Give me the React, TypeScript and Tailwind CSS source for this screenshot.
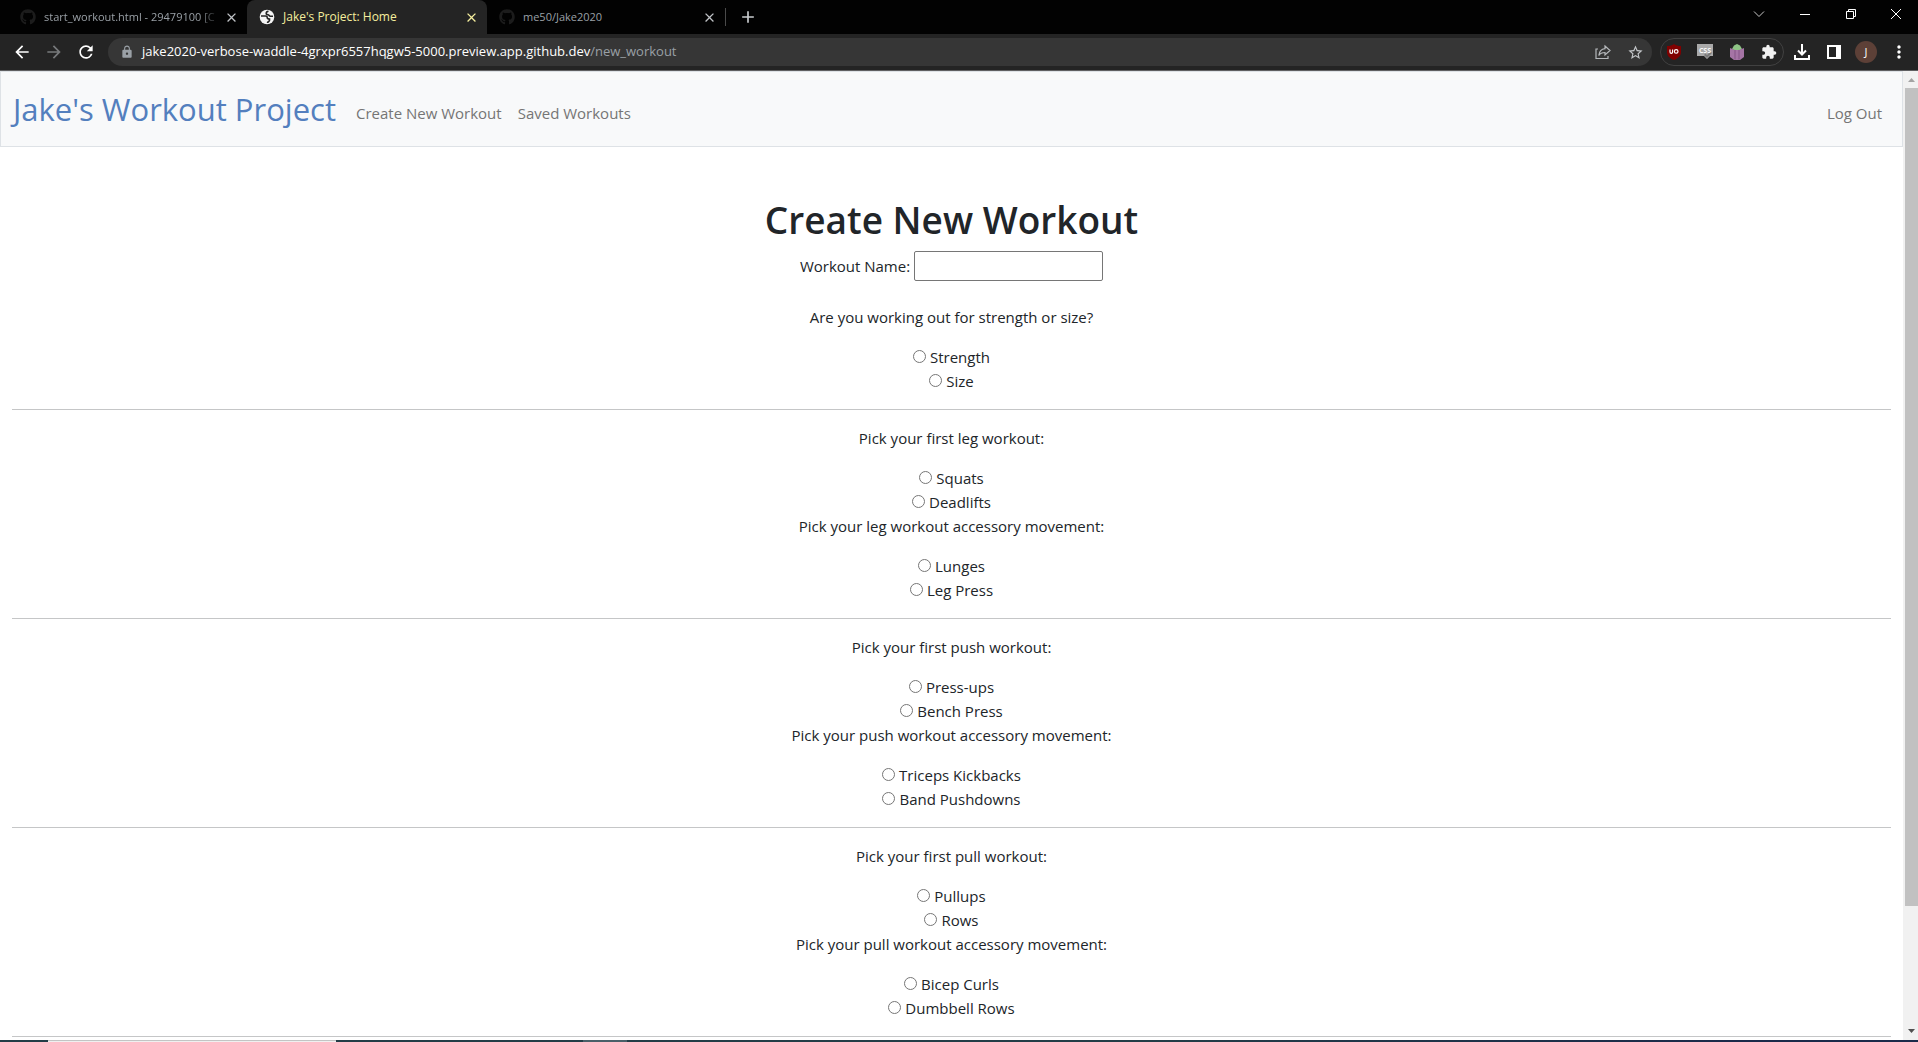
import { FaGithub } from "react-icons/fa";
import {
  MdArrowBack,
  MdArrowForward,
  MdClose,
  MdExtension,
  MdLock,
  MdMoreVert,
  MdRefresh,
  MdStarBorder,
  MdAdd,
} from "react-icons/md";

type Group = { prompt: string; name: string; options: string[] };

const sections: Group[][] = [
  [{ prompt: "Are you working out for strength or size?", name: "goal", options: ["Strength", "Size"] }],
  [
    { prompt: "Pick your first leg workout:", name: "leg", options: ["Squats", "Deadlifts"] },
    { prompt: "Pick your leg workout accessory movement:", name: "leg-accessory", options: ["Lunges", "Leg Press"] },
  ],
  [
    { prompt: "Pick your first push workout:", name: "push", options: ["Press-ups", "Bench Press"] },
    {
      prompt: "Pick your push workout accessory movement:",
      name: "push-accessory",
      options: ["Triceps Kickbacks", "Band Pushdowns"],
    },
  ],
  [
    { prompt: "Pick your first pull workout:", name: "pull", options: ["Pullups", "Rows"] },
    {
      prompt: "Pick your pull workout accessory movement:",
      name: "pull-accessory",
      options: ["Bicep Curls", "Dumbbell Rows"],
    },
  ],
];

function TabStrip() {
  return (
    <div className="flex h-[34px] shrink-0 bg-[#020202] text-[11px] text-[#9aa0a6]">
      <div className="flex w-[247px] items-center rounded-br-lg pl-5 pr-2">
        <FaGithub className="size-4 shrink-0 text-[#1c1c1c]" />
        <span className="ml-2 grow whitespace-nowrap [mask-image:linear-gradient(to_right,black_88%,transparent_100%)]">
          start_workout.html - 29479100 [C
        </span>
        <button aria-label="Close tab" className="ml-1 text-[#c0c3c7]">
          <MdClose className="size-[15px]" />
        </button>
      </div>
      <div className="flex w-[240px] items-center rounded-t-lg bg-[#242424] pl-3 pr-2 text-[12px] text-[#f5ee9e]">
        <svg viewBox="0 0 16 16" className="size-4">
          <circle cx="8" cy="8" r="7.300" fill="#f4f4f4" />
          <path
            d="M2 7h4.500c1.500 0 1.800.8 1.800 1.800S9.500 10 10.500 10v1.500c0 1-2 1-2 2.500"
            fill="none"
            stroke="#242424"
            strokeWidth="1.600"
          />
          <path
            d="M9.500 2.300c-1.800.2-2.300 1-2.300 2S8 5.800 9 5.800c1.300 0 1 1.400 2.300 1.400H14"
            fill="none"
            stroke="#242424"
            strokeWidth="1.600"
          />
        </svg>
        <span className="ml-2 grow">Jake's Project: Home</span>
        <button aria-label="Close tab">
          <MdClose className="size-[15px]" />
        </button>
      </div>
      <div className="flex w-[238px] items-center pl-3 pr-2">
        <FaGithub className="size-4 text-[#1c1c1c]" />
        <span className="ml-2 grow">me50/Jake2020</span>
        <button aria-label="Close tab" className="text-[#c0c3c7]">
          <MdClose className="size-[15px]" />
        </button>
      </div>
      <div className="my-2 w-px bg-[#4a4a4a]" />
      <button aria-label="New tab" className="ml-3 text-[#c8cbce]">
        <MdAdd className="size-5" />
      </button>
      <div className="ml-auto flex items-start text-white">
        <button aria-label="Search tabs" className="flex h-7 w-[46px] items-center justify-center">
          <svg viewBox="0 0 12 12" className="size-3" fill="none" stroke="#c8c8c8">
            <path d="M1 3.500l5 5 5-5" />
          </svg>
        </button>
        <button aria-label="Minimize" className="flex h-7 w-[46px] items-center justify-center">
          <svg viewBox="0 0 10 10" className="size-[10px]" fill="none" stroke="currentColor">
            <path d="M0 5.500h10" />
          </svg>
        </button>
        <button aria-label="Restore" className="flex h-7 w-[46px] items-center justify-center">
          <svg viewBox="0 0 10 10" className="size-[10px]" fill="none" stroke="currentColor">
            <path d="M.5 2.500h7v7h-7zM2.500 2.500v-2h7v7h-2" />
          </svg>
        </button>
        <button aria-label="Close window" className="flex h-7 w-11 items-center justify-center">
          <svg viewBox="0 0 10 10" className="size-[10px]" fill="none" stroke="currentColor">
            <path d="M0 0l10 10M10 0L0 10" />
          </svg>
        </button>
      </div>
    </div>
  );
}

function Toolbar() {
  return (
    <div className="flex h-[37px] shrink-0 items-center border-b border-[#5f5f61] bg-[#242424] pl-3 pr-[15px]">
      <button aria-label="Back" className="text-white">
        <MdArrowBack className="size-5" />
      </button>
      <button aria-label="Forward" className="ml-3 text-[#77797b]">
        <MdArrowForward className="size-5" />
      </button>
      <button aria-label="Reload" className="ml-3 text-white">
        <MdRefresh className="size-5" />
      </button>
      <div className="ml-3 flex h-7 grow items-center rounded-full bg-[#363636] pl-3 pr-2 text-[13px] text-[#9aa0a6]">
        <MdLock className="size-[14px]" />
        <span className="ml-2 grow">
          <span className="text-white">jake2020-verbose-waddle-4grxpr6557hqgw5-5000.preview.app.github.dev</span>
          /new_workout
        </span>
        <button aria-label="Share" className="text-[#b5b8bb]">
          <svg viewBox="0 0 16 16" className="size-4" fill="none" stroke="currentColor" strokeWidth="1.200">
            <path d="M3 5H1v9.500h12V12" />
            <path d="M10 2l5 4.500-5 4.500V8.500C7 8.500 5 9.500 3.800 11.500 4.200 8 6 5 10 4.600z" />
          </svg>
        </button>
        <button aria-label="Bookmark" className="ml-4 text-[#c3c6c9]">
          <MdStarBorder className="size-[17px]" />
        </button>
      </div>
      <div className="ml-2 flex h-7 items-center gap-4 rounded-full border border-[#414141] px-[6px]">
        <svg viewBox="0 0 14 16" className="h-4 w-[14px]">
          <path d="M7 0c2 1.500 4 2 7 2v6c0 4-3 6.500-7 8-4-1.500-7-4-7-8V2c3 0 5-.5 7-2z" fill="#800000" />
          <path d="M3 5.500v2.500q0 1.300 1.300 1.300t1.300-1.300V5.500" fill="none" stroke="white" strokeWidth="1.200" />
          <circle cx="9.200" cy="7.400" r="1.800" fill="none" stroke="white" strokeWidth="1.200" />
        </svg>
        <svg viewBox="0 0 16 16" className="size-4">
          <path d="M0 0h16v12h-3l-3 3-3-3H0z" fill="#a9a9a9" />
          <path d="M7 11l1.500-1.500L10 11l3.500-3.500L15 9l-5 5z" fill="#7a7a7a" />
          <text x="8" y="8.500" textAnchor="middle" fontSize="7" fontWeight="700" fill="#f8f8f8">
            CSS
          </text>
        </svg>
        <svg viewBox="0 0 16 16" className="size-4">
          <path d="M3 5l2-3.500L8 0l3 1.500L13 5 8 8z" fill="#8fc486" />
          <path d="M1 4l5 2h4l5-2v9l-4 3H5l-4-3z" fill="#a574a5" />
          <path d="M6 6v9.500M10 6v9.500" stroke="#855586" />
        </svg>
        <MdExtension className="size-4 text-[#f1f1f1]" />
      </div>
      <button aria-label="Downloads" className="ml-[10px] text-white">
        <svg viewBox="0 0 16 16" className="size-4" fill="none" stroke="currentColor" strokeWidth="2">
          <path d="M8 0v10M4 6.500l4 4 4-4M1 11v4h14v-4" />
        </svg>
      </button>
      <button aria-label="Side panel" className="ml-[17px] text-white">
        <svg viewBox="0 0 14 14" className="size-[14px]">
          <path fillRule="evenodd" d="M0 0h14v14H0zM2 2v10h7V2z" fill="currentColor" />
        </svg>
      </button>
      <button
        aria-label="Profile"
        className="ml-[14px] flex size-[22px] items-center justify-center rounded-full bg-[#5d4037] text-[11px] text-white"
      >
        J
      </button>
      <button aria-label="Menu" className="-mr-[6px] ml-3 text-white">
        <MdMoreVert className="size-5" />
      </button>
    </div>
  );
}

function Navbar() {
  return (
    <nav className="flex h-[76px] items-center border border-[#dee2e6] bg-[#f8f9fa] pl-3 pr-5 text-[15px] text-[#757575]">
      <a href="#home" className="text-[31px] leading-[45px] text-[#537fbe]">
        Jake's Workout Project
      </a>
      <a href="#new" className="ml-5 mt-2">
        Create New Workout
      </a>
      <a href="#saved" className="ml-4 mt-2">
        Saved Workouts
      </a>
      <a href="#logout" className="ml-auto mt-2">
        Log Out
      </a>
    </nav>
  );
}

function ChoiceGroup({ prompt, name, options }: Group) {
  return (
    <fieldset className="flex flex-col items-center">
      <legend className="mx-auto mb-4">{prompt}</legend>
      {options.map((option) => (
        <label key={option} className="flex items-center gap-1">
          <input type="radio" name={name} value={option} className="mb-0.5 size-[13px]" />
          {option}
        </label>
      ))}
    </fieldset>
  );
}

function Scrollbar() {
  return (
    <div className="flex w-[15px] shrink-0 flex-col items-end bg-[#f1f1f1]">
      <svg viewBox="0 0 13 17" className="h-[17px] w-[13px]">
        <path d="M3 11h7L6.500 7z" fill="#a3a3a3" />
      </svg>
      <div className="flex w-[13px] grow flex-col">
        <div className="grow-[818] bg-[#c1c1c1]" />
        <div className="grow-[117]" />
      </div>
      <svg viewBox="0 0 13 17" className="h-[17px] w-[13px]">
        <path d="M3 6h7l-3.500 4z" fill="#505050" />
      </svg>
    </div>
  );
}

export default function App() {
  return (
    <div className="flex h-screen flex-col overflow-hidden bg-white font-['Open_Sans',sans-serif]">
      <TabStrip />
      <Toolbar />
      <div className="flex min-h-0 grow">
        <div className="grow overflow-hidden text-[15px] leading-6 text-[#212529]">
          <Navbar />
          <main className="px-3 pt-12">
            <form>
              <h1 className="mb-2 text-center text-[37px] font-semibold leading-[50px]">Create New Workout</h1>
              <div className="-mt-0.5 mb-6 flex items-center justify-center gap-1">
                <label htmlFor="workout-name">Workout Name:</label>
                <input
                  id="workout-name"
                  type="text"
                  className="h-[30px] w-[189px] rounded-xs border border-[#767676] bg-white px-1"
                />
              </div>
              {sections.map((groups) => (
                <div key={groups[0].name} className="mb-4 border-b border-[#c5c6c7] pb-4">
                  {groups.map((group) => (
                    <ChoiceGroup key={group.name} {...group} />
                  ))}
                </div>
              ))}
            </form>
          </main>
        </div>
        <Scrollbar />
      </div>
      <div className="flex h-[2px] shrink-0 bg-linear-to-r from-[#233d47] from-60% to-[#1b2a4a] to-90%">
        <div className="w-12" />
        <div className="w-72 border-t border-[#c4c4c4] bg-[#f0f0f0]" />
        <div className="w-[247px]" />
        <div className="w-11 bg-[#4a6069]" />
      </div>
    </div>
  );
}
